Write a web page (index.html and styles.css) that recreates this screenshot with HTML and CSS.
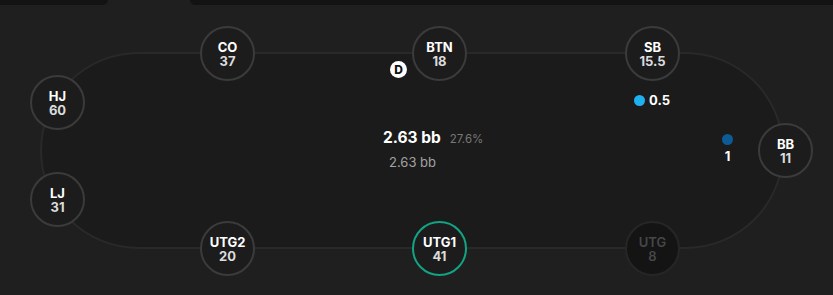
FILE: index.html
```html
<!DOCTYPE html>
<html>
<head>
<meta charset="utf-8">
<link rel="stylesheet" href="styles.css">
</head>
<body>
<div class="topbar">
  <div class="seg seg-left"></div>
  <div class="tab-gap"></div>
  <div class="seg seg-right"></div>
</div>
<div class="stage">
  <div class="table"></div>

  <div class="seat" style="left:200px;top:26px"><span class="pos">CO</span><span class="stack">37</span></div>
  <div class="seat" style="left:412px;top:26px"><span class="pos">BTN</span><span class="stack">18</span></div>
  <div class="seat" style="left:625px;top:26px"><span class="pos">SB</span><span class="stack">15.5</span></div>
  <div class="seat" style="left:30px;top:75px"><span class="pos">HJ</span><span class="stack">60</span></div>
  <div class="seat" style="left:758px;top:123px"><span class="pos">BB</span><span class="stack">11</span></div>
  <div class="seat" style="left:30px;top:172px"><span class="pos">LJ</span><span class="stack">31</span></div>
  <div class="seat" style="left:200px;top:221px"><span class="pos">UTG2</span><span class="stack">20</span></div>
  <div class="seat active" style="left:412px;top:221px"><span class="pos">UTG1</span><span class="stack">41</span></div>
  <div class="seat folded" style="left:625px;top:221px"><span class="pos">UTG</span><span class="stack">8</span></div>

  <div class="dealer">D</div>

  <div class="bet bet-sb"><span class="chip chip-light"></span><span class="amount">0.5</span></div>
  <div class="bet bet-bb"><span class="chip chip-dark"></span><span class="amount">1</span></div>

  <div class="pot">
    <div class="pot-main"><span class="pot-value">2.63 bb</span><span class="pot-pct">27.6%</span></div>
    <div class="pot-sub">2.63 bb</div>
  </div>
</div>
</body>
</html>
```
FILE: styles.css
```css
html, body {
  margin: 0;
  padding: 0;
  background: #1f1f1f;
  font-family: Inter, "Noto Sans", Roboto, sans-serif;
  color: #fff;
  overflow: hidden;
}

.topbar {
  display: flex;
  height: 5px;
}
.seg {
  background: #131313;
}
.seg-left {
  width: 108px;
  border-bottom-right-radius: 5px;
}
.tab-gap {
  width: 82px;
}
.seg-right {
  flex: 1;
  border-bottom-left-radius: 5px;
}

.stage {
  position: relative;
  height: 290px;
  margin-top: -5px;
}

.table {
  position: absolute;
  left: 40px;
  top: 52px;
  width: 744px;
  height: 197px;
  box-sizing: border-box;
  border: 2px solid #292929;
  border-radius: 99px;
  background: #1b1b1b;
}

.seat {
  position: absolute;
  width: 55px;
  height: 55px;
  box-sizing: border-box;
  border: 2px solid #3b3b3b;
  border-radius: 50%;
  background: #1c1c1c;
  display: flex;
  flex-direction: column;
  align-items: center;
  justify-content: center;
  font-weight: 700;
  font-size: 13px;
  line-height: 14px;
}
.seat .pos {
  color: #fff;
}
.seat .stack {
  color: #dcdcdc;
}
.seat.active {
  border-color: #12a384;
}
.seat.folded {
  background: #141414;
  border-color: #262626;
  font-weight: 600;
}
.seat.folded .pos,
.seat.folded .stack {
  color: #474747;
}

.dealer {
  position: absolute;
  left: 390px;
  top: 61px;
  width: 17px;
  height: 17px;
  border-radius: 50%;
  background: #fff;
  color: #111;
  font-weight: 800;
  font-size: 12px;
  line-height: 17px;
  text-align: center;
}

.bet {
  position: absolute;
  display: flex;
  align-items: center;
  font-weight: 700;
  font-size: 13px;
  color: #fff;
}
.chip {
  display: block;
  width: 11px;
  height: 11px;
  border-radius: 50%;
}
.chip-light {
  background: #1fb0f0;
}
.chip-dark {
  background: #0c5b96;
}
.bet-sb {
  left: 634px;
  top: 92px;
  gap: 4px;
}
.bet-bb {
  left: 722px;
  top: 134px;
  flex-direction: column;
  gap: 3px;
}

.pot {
  position: absolute;
  left: 383px;
  top: 128px;
}
.pot-main {
  display: flex;
  align-items: baseline;
  gap: 9px;
}
.pot-value {
  font-size: 15.5px;
  font-weight: 700;
  color: #fff;
}
.pot-pct {
  font-size: 11.5px;
  color: #777;
}
.pot-sub {
  margin-top: 7px;
  margin-left: 6px;
  font-size: 13px;
  color: #a3a3a3;
}
```
